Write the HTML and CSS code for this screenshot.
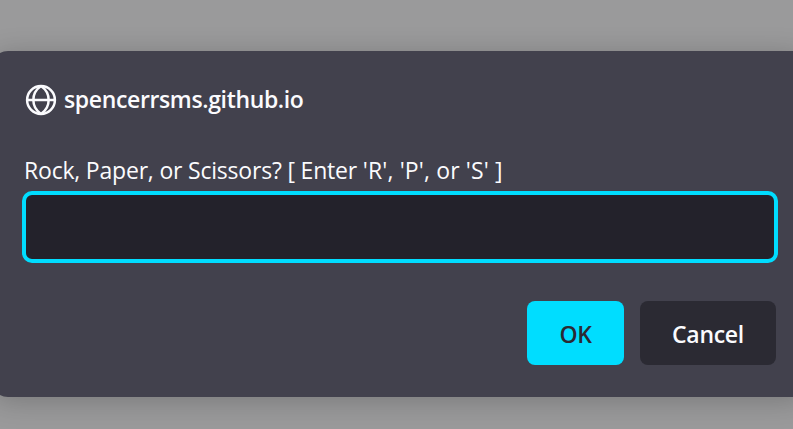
FILE: index.html
```html
<!DOCTYPE html>
<html lang="en">
<head>
<meta charset="utf-8">
<title>Prompt</title>
<link rel="stylesheet" href="styles.css">
</head>
<body>
<main class="dialog">
  <header class="origin">
    <svg class="globe" viewBox="0 0 32 32" aria-hidden="true">
      <circle cx="16" cy="16" r="13.9"/>
      <path d="M16 2C5.8 9 5.8 23 16 30M16 2C26.2 9 26.2 23 16 30M2 16H30"/>
    </svg>
    <h1 class="host">spencerrsms.github.io</h1>
  </header>
  <label class="question" for="answer">Rock, Paper, or Scissors? [ Enter <span class="keys">'R', 'P', or 'S' ]</span></label>
  <input class="answer" id="answer" type="text">
  <div class="actions">
    <button class="button primary">OK</button>
    <button class="button">Cancel</button>
  </div>
</main>
</body>
</html>
```

FILE: styles.css
```css
* { box-sizing: border-box; }
body {
  margin: 0;
  height: 429px;
  padding-top: 51px;
  overflow: hidden;
  background: #9a9a9b;
  color: #fbfbfe;
  font-family: "Open Sans", "Noto Sans", sans-serif;
}
.dialog {
  width: 816px;
  height: 346px;
  margin-left: -8px;
  padding: 33px 0 0 30px;
  border-radius: 16px;
  background: #42414d;
  box-shadow: 0 4px 28px rgba(0, 0, 0, .22);
}
.origin { display: flex; align-items: center; gap: 7px; height: 32px; margin-left: 3px; }
.globe { width: 32px; height: 32px; fill: none; stroke: currentColor; stroke-width: 2.5; }
.host { margin: -2px 0 0; font-size: 23px; line-height: 32px; font-weight: 600; letter-spacing: -.36px; white-space: nowrap; }
.question { display: block; margin: 38px 0 0 2px; height: 37px; font-size: 23px; line-height: 32px; letter-spacing: -.2px; white-space: nowrap; }
.keys { letter-spacing: .14px; }
.answer {
  display: block;
  width: 756px;
  height: 72px;
  border: 4px solid #00ddff;
  border-radius: 10px;
  outline: none;
  background: #23222b;
  color: inherit;
}
.actions { display: flex; justify-content: flex-end; gap: 16px; width: 754px; margin-top: 38px; }
.button {
  width: 136px;
  height: 64px;
  padding: 2px 0 0;
  border: 0;
  border-radius: 8px;
  background: #2b2a33;
  color: #fbfbfe;
  font: 600 23px "Open Sans", sans-serif;
  letter-spacing: -.3px;
}
.primary { width: 97px; background: #00ddff; color: #2b2a33; }
```
